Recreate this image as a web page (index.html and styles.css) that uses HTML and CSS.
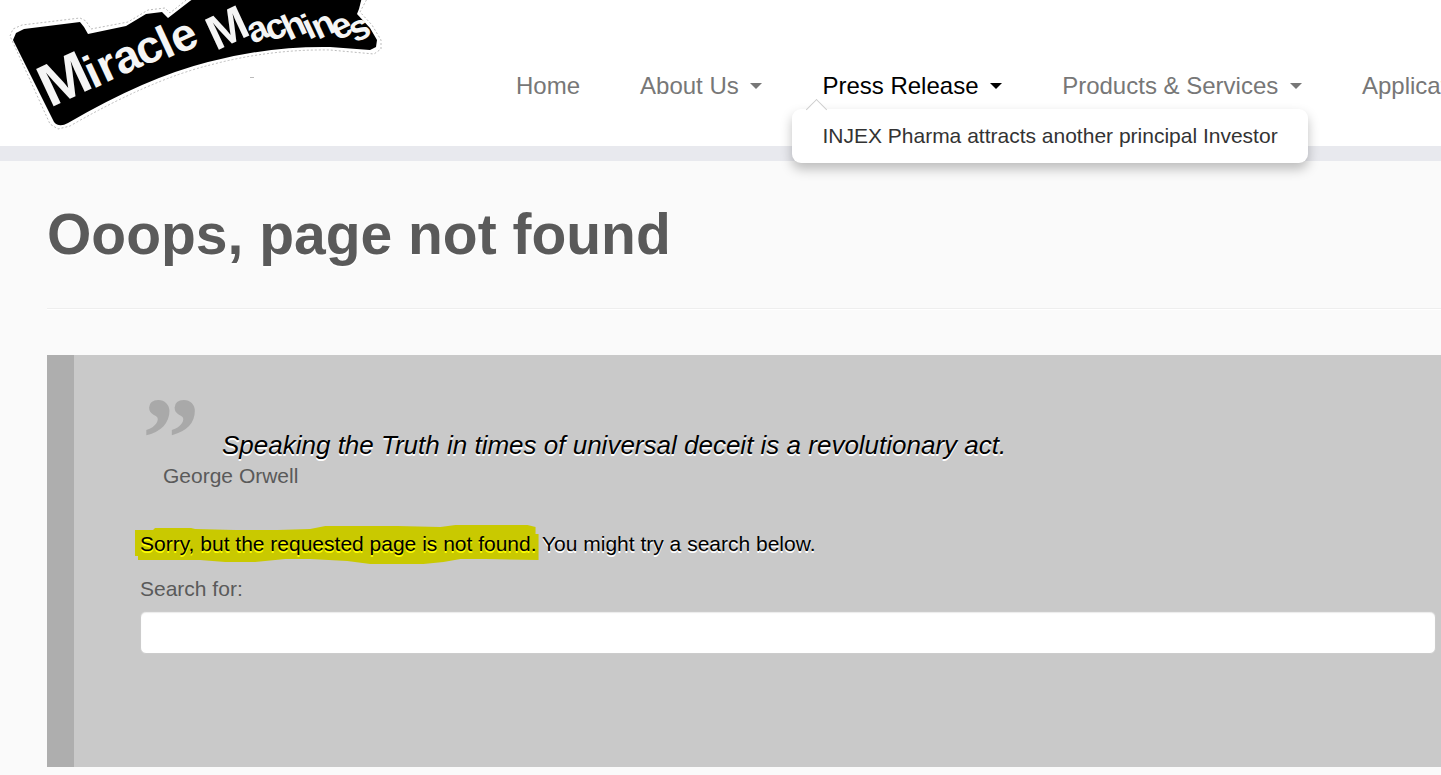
FILE: index.html
```html
<!DOCTYPE html>
<html lang="en">
<head>
    <meta charset="UTF-8">
    <meta name="viewport" content="width=device-width, initial-scale=1.0">
    <title>Page not found | Miracle Machines</title>
    <link rel="stylesheet" href="styles.css">
</head>
<body>
    <header class="site-header">
        <a href="#" class="brand">
            <svg class="logo" viewBox="0 0 390 132" role="img" aria-label="Miracle Machines">
                <path class="logo-edge" d="M10 36 L13 29 L22 25 L80 18 L86 21 L91 29 L128 22 L148 10 L165 8 L170 13 L190 -3 L368 -3 L360 12 L372 25 L381 40 L381 49 L374 54 L330 50 Q270 49 210 65 Q150 80 70 126 L58 129 L50 124 Z"/>
                <path class="logo-band" d="M13 40 L16 33 L24 29 L80 22 L84 27 L88 34 L126 26 L146 14 L162 12 L168 18 L190 1 L196 -3 L362 -3 L359 9 L357 14 L370 28 L377 40 L376 47 L370 50 L330 47 Q270 46 208 62 Q145 78 68 123 Q59 128 54 122 Z"/>
                <g class="logo-text">
                    <text x="50" y="108" rotate="-25" font-size="60">M</text>
                    <text x="93 105 121 143 166 178" y="89 83 76 67 59 55" rotate="-25" font-size="46">iracle</text>
                    <text x="216" y="51" rotate="-25" font-size="48">M</text>
                    <text x="253 271 289 309 318 337 355" y="44 42 41 40 40 41 43" rotate="-25" font-size="36">achines</text>
                </g>
                <path class="logo-speck" d="M250 77.500h4"/>
            </svg>
        </a>
        <nav class="main-nav">
            <ul class="menu">
                <li class="menu-item"><a href="#" class="menu-link">Home</a></li>
                <li class="menu-item"><a href="#" class="menu-link">About Us <span class="caret"></span></a></li>
                <li class="menu-item open">
                    <a href="#" class="menu-link">Press Release <span class="caret"></span></a>
                    <ul class="dropdown">
                        <li><a href="#" class="dropdown-link">INJEX Pharma attracts another principal Investor</a></li>
                    </ul>
                </li>
                <li class="menu-item"><a href="#" class="menu-link">Products &amp; Services <span class="caret"></span></a></li>
                <li class="menu-item"><a href="#" class="menu-link">Applications <span class="caret"></span></a></li>
            </ul>
        </nav>
    </header>

    <main class="content">
        <h1>Ooops, page not found</h1>
        <hr>

        <section class="error-box">
            <blockquote class="quote">
                <div class="quote-row">
                    <span class="quote-mark">”</span>
                    <p class="quote-text">Speaking the Truth in times of universal deceit is a revolutionary act.</p>
                </div>
                <footer class="quote-author">George Orwell</footer>
            </blockquote>

            <p class="message">
                <span class="marker"><svg class="marker-ink" viewBox="0 0 403 40" preserveAspectRatio="none" aria-hidden="true">
                        <path d="M0 5 L18 5 L20 3 L56 3 L60 4 L100 5 L142 5 L175 4 L190 1 L262 1 L305 2 L320 0 L392 0 L400 2 L400 9 L403 9 L403 35 L350 34 L325 34 L308 37 L288 39 L235 39 L212 36 L175 34 L150 34 L120 37 L90 37 L65 35 L3 35 L3 31 L0 31 Z"/>
                    </svg><span class="marker-text">Sorry, but the requested page is not found.</span></span>
                You might try a search below.
            </p>

            <form class="search-form" action="#" method="get">
                <label for="search">Search for:</label>
                <input type="text" id="search" name="s">
            </form>
        </section>
    </main>
</body>
</html>
```
FILE: styles.css
```css
* {
    box-sizing: border-box;
}

body {
    margin: 0;
    background-color: #fafafa;
    color: #5a5a5a;
    font-family: "Liberation Sans", Arial, sans-serif;
    font-size: 21px;
    line-height: 30px;
    overflow-x: hidden;
}

/* Header */
.site-header {
    display: flex;
    background-color: #fff;
    border-bottom: 15px solid #e8e9ee;
}

.brand {
    flex: none;
    height: 146px;
    padding-right: 96px;
}

.logo {
    display: block;
    width: 390px;
    height: 132px;
}

.logo-edge {
    fill: #fff;
    stroke: #bbb;
    stroke-width: 1;
    stroke-dasharray: 2 2;
}

.logo-band {
    fill: #000;
}

.logo-text {
    fill: #f5f5f5;
    font-family: "Liberation Sans", Arial, sans-serif;
    font-weight: bold;
}

.logo-speck {
    stroke: #bbb;
}

.main-nav {
    padding-top: 71px;
}

.menu,
.dropdown {
    list-style: none;
    margin: 0;
    padding: 0;
}

.menu {
    display: flex;
}

.menu-item {
    position: relative;
    padding: 0 30px;
}

.menu-link {
    display: block;
    color: #777;
    font-size: 24px;
    text-decoration: none;
    white-space: nowrap;
}

.open .menu-link {
    color: #000;
}

.caret {
    display: inline-block;
    margin-bottom: 4px;
    margin-left: 5px;
    border-top: 6px solid;
    border-left: 6px solid transparent;
    border-right: 6px solid transparent;
    vertical-align: middle;
}

.dropdown {
    position: absolute;
    top: 38px;
    left: 0;
    z-index: 10;
    padding: 12px 30px;
    background-color: #fff;
    border-radius: 9px;
    box-shadow: 0 6px 12px rgba(0, 0, 0, 0.25);
}

.dropdown::before {
    content: "";
    position: absolute;
    top: -7px;
    left: 17px;
    width: 14px;
    height: 14px;
    background-color: #fff;
    border-top: 1px solid #ccc;
    border-left: 1px solid #ccc;
    transform: rotate(45deg);
}

.dropdown-link {
    color: #333;
    text-decoration: none;
    white-space: nowrap;
}

/* Page content */
.content {
    padding: 41px 0 8px 47px;
}

h1 {
    margin: 0;
    font-size: 57px;
    line-height: 64px;
    text-shadow: 0 2px 0 #fff;
}

hr {
    margin: 42px 0 45px;
    border: 0;
    border-top: 1px solid #eee;
    border-bottom: 1px solid #fff;
}

.error-box {
    padding: 44px 5px 113px 66px;
    background-color: #c9c9c9;
    border-left: 27px solid #aeaeae;
}

.quote {
    margin: 0 0 38px;
}

.quote-row {
    display: flex;
    align-items: flex-end;
    height: 61px;
    margin-bottom: 1px;
}

.quote-mark {
    width: 82px;
    height: 61px;
    padding-left: 2px;
    color: #a9a9a9;
    font-family: "Liberation Serif", serif;
    font-size: 116px;
    font-weight: bold;
    line-height: 80px;
}

.quote-text {
    margin: 0;
    color: #000;
    font-size: 26px;
    font-style: italic;
    text-shadow: 0 2px 0 #fff;
}

.quote-author {
    margin-left: 23px;
}

.message {
    margin: 0 0 15px;
    color: #000;
    text-shadow: 0 2px 0 #fff;
}

/* Highlighter stroke behind the text */
.marker {
    position: relative;
    text-shadow: 0 2px 0 #ff0;
}

.marker-ink {
    position: absolute;
    top: -7px;
    left: -5px;
    width: calc(100% + 7px);
    height: 40px;
    fill: #c9c900;
}

.marker-text {
    position: relative;
}

.search-form label {
    display: block;
    margin-bottom: 7px;
}

.search-form input {
    display: block;
    width: 100%;
    height: 43px;
    padding: 8px 16px;
    background-color: #fff;
    border: 1px solid #ccc;
    border-radius: 6px;
    box-shadow: inset 0 1px 1px rgba(0, 0, 0, 0.08);
    font: inherit;
}
```
